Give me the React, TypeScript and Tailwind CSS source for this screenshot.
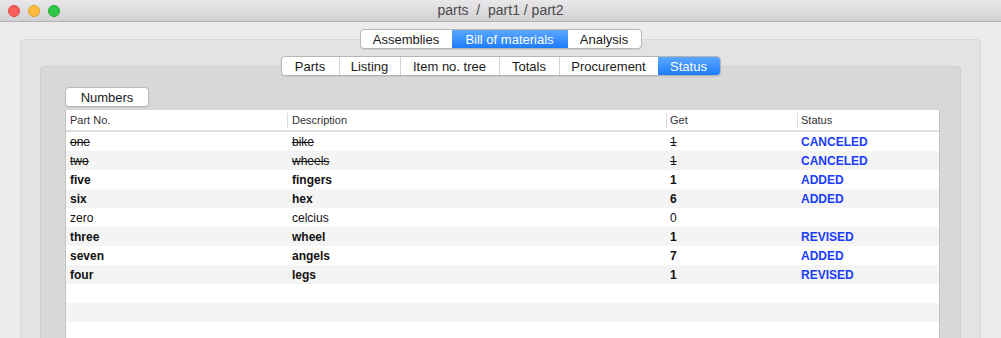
import React from "react";

const font = { fontFamily: '"Liberation Sans", Arial, Helvetica, sans-serif' };

type Seg = { label: string; w: number; active?: boolean };

function Segmented({ items }: { items: Seg[] }) {
  return (
    <div className="relative z-10 flex justify-center">
      <div className="flex h-[20px] rounded-[4px] border border-[#b6b6b6] bg-white shadow-[0_1px_1px_rgba(0,0,0,0.08)] overflow-hidden">
        {items.map((s, i) => (
          <div
            key={s.label}
            style={{ width: s.w }}
            className={
              "flex h-full items-center justify-center text-[13px] leading-none " +
              (s.active
                ? "bg-linear-to-b from-[#5aa7fd] to-[#1b7cfb] text-white"
                : "text-[#1a1a1a] ") +
              (i > 0 && !s.active && !items[i - 1].active ? " border-l border-[#d4d4d4]" : "")
            }
          >
            {s.label}
          </div>
        ))}
      </div>
    </div>
  );
}

type Row = { part: string; desc: string; get: string; status: string; kind: "strike" | "bold" | "normal" };

const rows: Row[] = [
  { part: "one", desc: "bike", get: "1", status: "CANCELED", kind: "strike" },
  { part: "two", desc: "wheels", get: "1", status: "CANCELED", kind: "strike" },
  { part: "five", desc: "fingers", get: "1", status: "ADDED", kind: "bold" },
  { part: "six", desc: "hex", get: "6", status: "ADDED", kind: "bold" },
  { part: "zero", desc: "celcius", get: "0", status: "", kind: "normal" },
  { part: "three", desc: "wheel", get: "1", status: "REVISED", kind: "bold" },
  { part: "seven", desc: "angels", get: "7", status: "ADDED", kind: "bold" },
  { part: "four", desc: "legs", get: "1", status: "REVISED", kind: "bold" },
];

const cols = "grid grid-cols-[221px_379px_131px_1fr]";

export default function App() {
  const cellCls = (k: Row["kind"]) =>
    "pl-[4px] text-[12px] text-[#111] truncate " +
    (k === "strike" ? "line-through" : k === "bold" ? "font-bold" : "");
  const empty = 4;
  return (
    <div style={font} className="w-[1001px] h-[338px] overflow-hidden bg-[#ececec] flex flex-col">
      {/* title bar */}
      <div className="relative h-[22px] shrink-0 bg-linear-to-b from-[#e9e7e9] to-[#d3d1d3] border-b border-[#b1b1b1] flex items-center justify-center">
        <div className="absolute left-[8px] top-[5px] flex gap-[8px]">
          <span className="w-[12px] h-[12px] rounded-full bg-[#fc605c] border border-[#e0443e]" />
          <span className="w-[12px] h-[12px] rounded-full bg-[#fdbc40] border border-[#dea123]" />
          <span className="w-[12px] h-[12px] rounded-full bg-[#34c84a] border border-[#1aab29]" />
        </div>
        <span className="text-[14px] text-[#4a4a4a] whitespace-pre">parts  /  part1 / part2</span>
      </div>

      {/* body */}
      <div className="flex-1 flex flex-col px-[20px] pt-[7px]">
        <Segmented
          items={[
            { label: "Assemblies", w: 91 },
            { label: "Bill of materials", w: 116, active: true },
            { label: "Analysis", w: 73 },
          ]}
        />
        <div className="-mt-[10px] flex-1 flex flex-col rounded-[4px] border border-[#d8d8d8] bg-[#e3e3e3] px-[19px] pt-[16px]">
          <Segmented
            items={[
              { label: "Parts", w: 57 },
              { label: "Listing", w: 61 },
              { label: "Item no. tree", w: 99 },
              { label: "Totals", w: 60 },
              { label: "Procurement", w: 99 },
              { label: "Status", w: 62, active: true },
            ]}
          />
          <div className="-mt-[10px] flex-1 flex flex-col rounded-[4px] border border-[#cecece] bg-[#d8d8d8] pl-[24px] pr-[20px] pt-[20px]">
            <div className="flex h-[20px]">
              <button className="flex items-center justify-center w-[84px] h-[20px] rounded-[4px] border border-[#b9b9b9] bg-white text-[13px] text-[#1a1a1a] leading-none shadow-[0_1px_0_rgba(0,0,0,0.06)]">
                Numbers
              </button>
            </div>
            <div className="mt-[3px] flex-1 bg-white border-x border-[#c4c4c4]">
              {/* header */}
              <div className={cols + " h-[22px] border-b-2 border-[#dedede] items-center text-[11px] text-[#333]"}>
                <div className="pl-[4px]">Part No.</div>
                <div className="pl-[4px] border-l border-[#dcdcdc] h-[15px] flex items-center">Description</div>
                <div className="pl-[3px] border-l border-[#dcdcdc] h-[15px] flex items-center">Get</div>
                <div className="pl-[3px] border-l border-[#dcdcdc] h-[15px] flex items-center">Status</div>
              </div>
              {rows.map((r, i) => (
                <div
                  key={r.part}
                  className={cols + " h-[19px] items-center " + (i % 2 === 1 ? "bg-[#f4f4f4]" : "bg-white")}
                >
                  <div className={cellCls(r.kind)}>{r.part}</div>
                  <div className={cellCls(r.kind) + " pl-[5px]"}>{r.desc}</div>
                  <div className={cellCls(r.kind)}>{r.get}</div>
                  <div className="pl-[4px] text-[12px] font-bold text-[#1a3cfb]">{r.status}</div>
                </div>
              ))}
              {Array.from({ length: empty }).map((_, j) => (
                <div
                  key={"e" + j}
                  className={"h-[19px] " + ((rows.length + j) % 2 === 1 ? "bg-[#f4f4f4]" : "bg-white")}
                />
              ))}
            </div>
          </div>
        </div>
      </div>
    </div>
  );
}
